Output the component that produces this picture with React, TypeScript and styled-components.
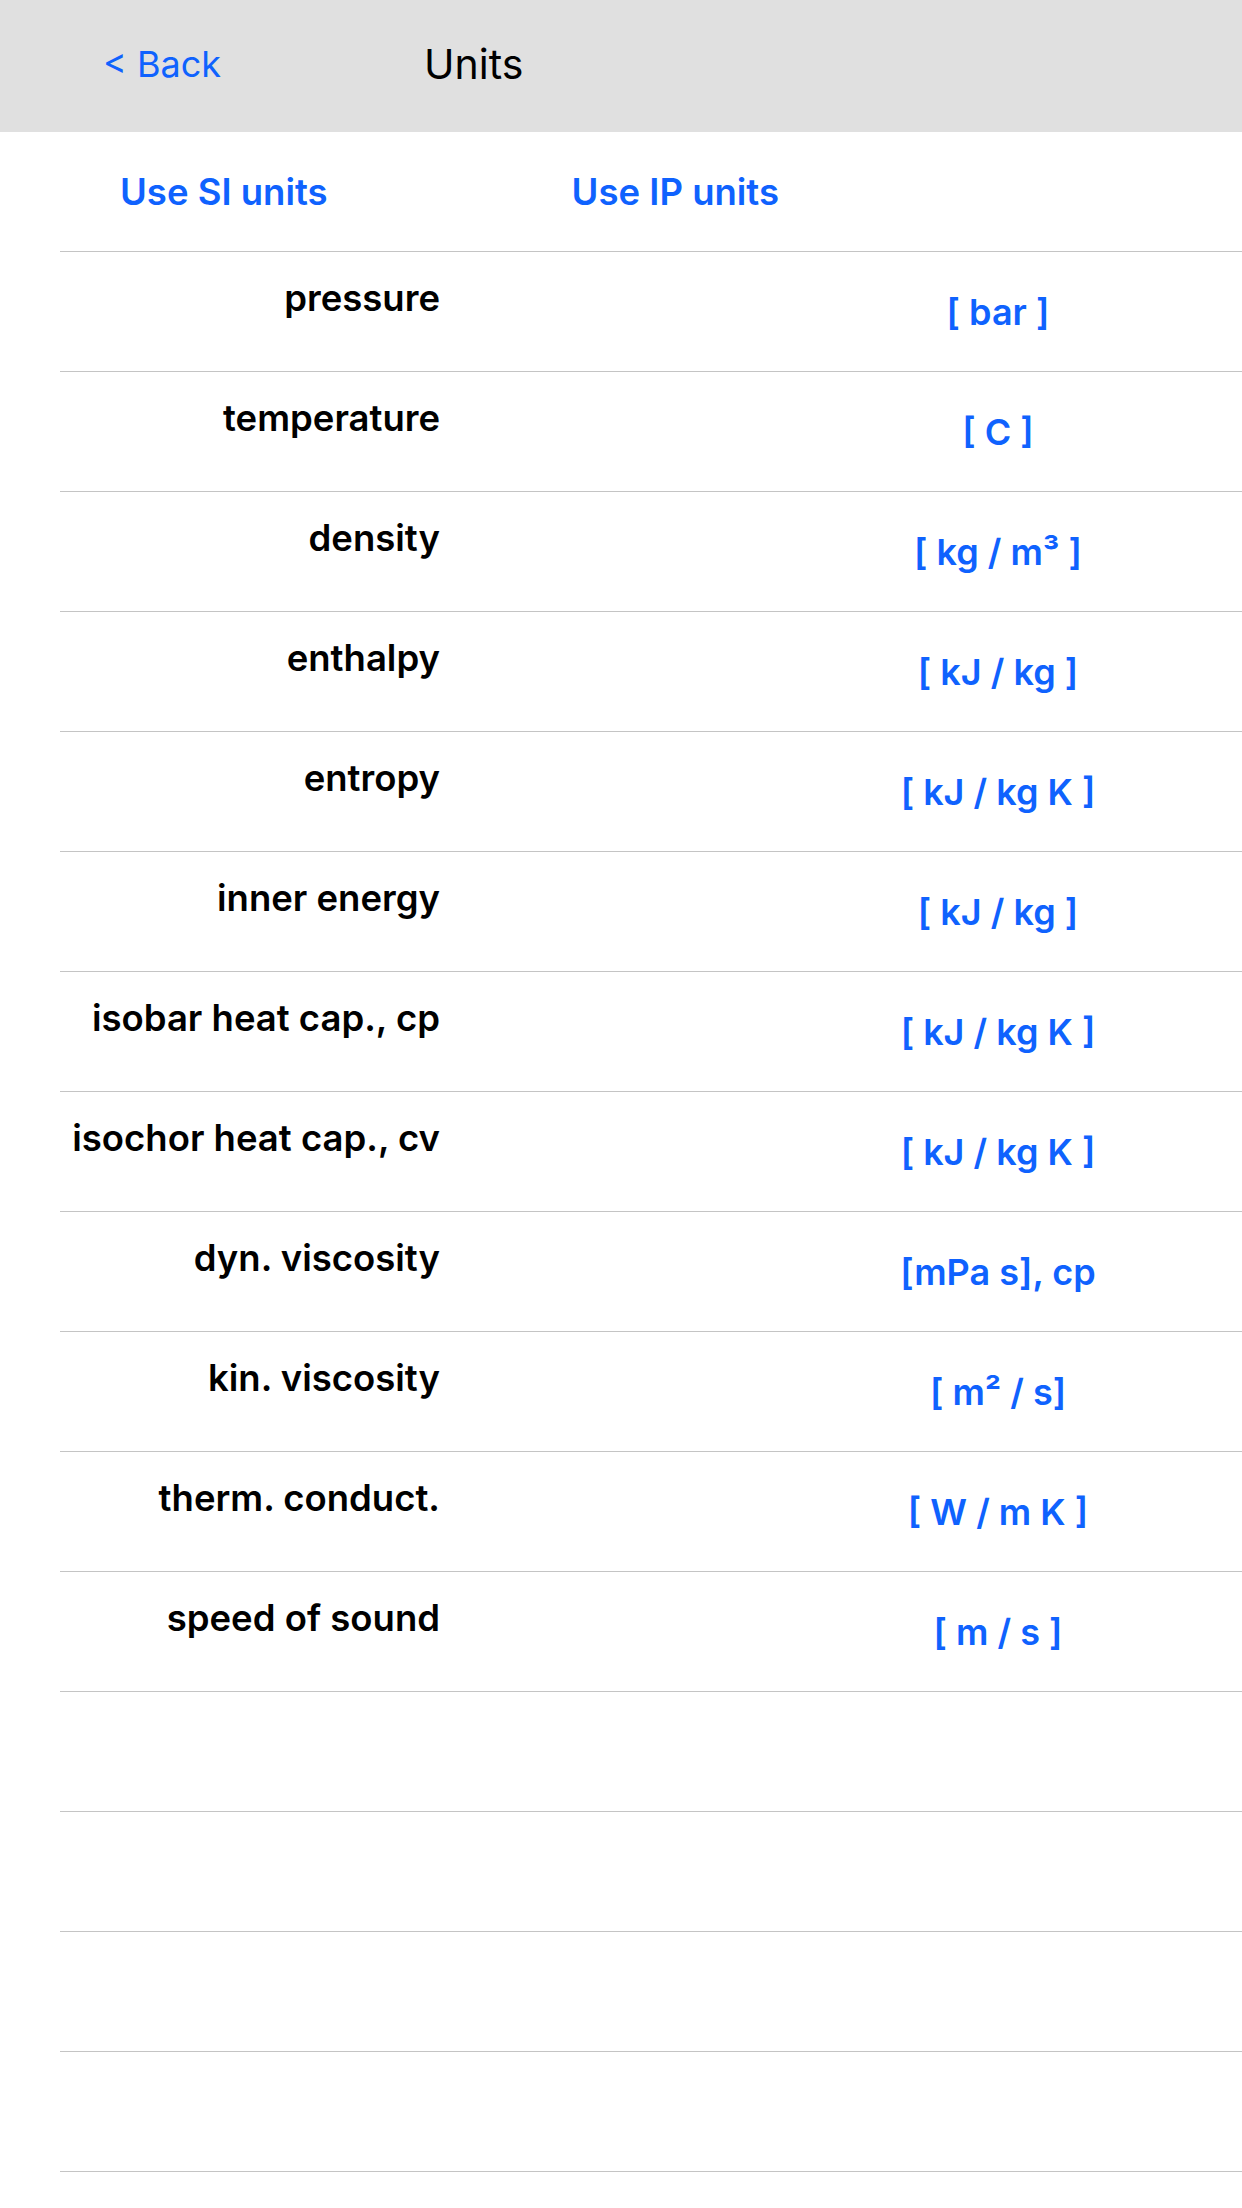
import styled, { createGlobalStyle } from "styled-components";

const GlobalStyle = createGlobalStyle`
  html, body {
    margin: 0;
    padding: 0;
    background: #ffffff;
  }
  body {
    font-family: Inter, "Noto Sans", "Liberation Sans", sans-serif;
    -webkit-font-smoothing: antialiased;
  }
`;

const ACCENT = "#0f62fe";
const RULE = "#c4c4c4";

const Screen = styled.div`
  display: flex;
  flex-direction: column;
  width: 1242px;
  min-height: 2208px;
  background: #ffffff;
`;

const NavBar = styled.header`
  display: flex;
  align-items: center;
  height: 132px;
  padding: 0 0 4px 103px;
  box-sizing: border-box;
  background: #e0e0e0;
`;

const BackButton = styled.button`
  border: none;
  background: none;
  padding: 0;
  margin: 0;
  font-family: inherit;
  font-size: 36px;
  font-weight: 400;
  color: ${ACCENT};
  cursor: pointer;
`;

const NavTitle = styled.h1`
  margin: 0 0 0 203px;
  font-size: 41px;
  font-weight: 400;
  color: #000000;
`;

const SystemRow = styled.div`
  display: flex;
  align-items: center;
  height: 119px;
  padding-left: 120px;
  gap: 244px;
`;

const SystemButton = styled.button`
  border: none;
  background: none;
  padding: 0;
  font-family: inherit;
  font-size: 36.5px;
  font-weight: 600;
  color: ${ACCENT};
  cursor: pointer;
`;

const Table = styled.div`
  display: flex;
  flex-direction: column;
  margin-left: 60px;
  border-top: 1px solid ${RULE};
`;

const Row = styled.div`
  display: grid;
  grid-template-columns: 380px 1fr 488px;
  height: 119px;
  border-bottom: 1px solid ${RULE};
`;

const Quantity = styled.span`
  grid-column: 1;
  align-self: start;
  padding-top: 24px;
  text-align: right;
  font-size: 36.5px;
  font-weight: 600;
  color: #000000;
  white-space: nowrap;
`;

const UnitButton = styled.button`
  grid-column: 3;
  align-self: center;
  justify-self: center;
  border: none;
  background: none;
  padding: 0;
  font-family: inherit;
  font-size: 36px;
  font-weight: 600;
  color: ${ACCENT};
  white-space: nowrap;
  cursor: pointer;
`;

interface UnitEntry {
  readonly quantity: string;
  readonly unit: string;
}

const entries: ReadonlyArray<UnitEntry> = [
  { quantity: "pressure", unit: "[ bar ]" },
  { quantity: "temperature", unit: "[ C ]" },
  { quantity: "density", unit: "[ kg / m³ ]" },
  { quantity: "enthalpy", unit: "[ kJ / kg ]" },
  { quantity: "entropy", unit: "[ kJ / kg K ]" },
  { quantity: "inner energy", unit: "[ kJ / kg ]" },
  { quantity: "isobar heat cap., cp", unit: "[ kJ / kg K ]" },
  { quantity: "isochor heat cap., cv", unit: "[ kJ / kg K ]" },
  { quantity: "dyn. viscosity", unit: "[mPa s], cp" },
  { quantity: "kin. viscosity", unit: "[ m² / s]" },
  { quantity: "therm. conduct.", unit: "[ W / m K ]" },
  { quantity: "speed of sound", unit: "[ m / s ]" },
];

const EMPTY_ROWS = 4;

export default function App() {
  return (
    <>
      <GlobalStyle />
      <Screen>
        <NavBar>
          <BackButton type="button">&lt; Back</BackButton>
          <NavTitle>Units</NavTitle>
        </NavBar>
        <SystemRow>
          <SystemButton type="button">Use SI units</SystemButton>
          <SystemButton type="button">Use IP units</SystemButton>
        </SystemRow>
        <Table>
          {entries.map((entry) => (
            <Row key={entry.quantity}>
              <Quantity>{entry.quantity}</Quantity>
              <UnitButton type="button">{entry.unit}</UnitButton>
            </Row>
          ))}
          {Array.from({ length: EMPTY_ROWS }, (_, i) => (
            <Row key={`empty-${i}`} />
          ))}
        </Table>
      </Screen>
    </>
  );
}
